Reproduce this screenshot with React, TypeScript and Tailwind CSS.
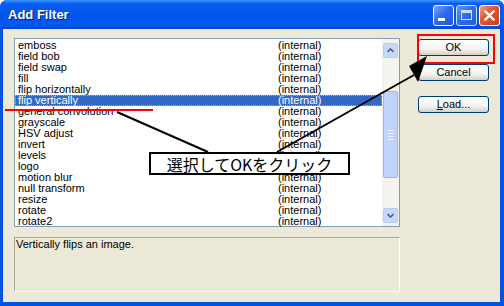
import React from 'react';

const filters = [
  'emboss',
  'field bob',
  'field swap',
  'fill',
  'flip horizontally',
  'flip vertically',
  'general convolution',
  'grayscale',
  'HSV adjust',
  'invert',
  'levels',
  'logo',
  'motion blur',
  'null transform',
  'resize',
  'rotate',
  'rotate2',
];

function CaptionButton({ kind }: { kind: 'min' | 'max' | 'close' }) {
  const bg =
    kind === 'close'
      ? 'bg-[linear-gradient(135deg,#f0a08a_0%,#e05a32_40%,#c2401c_100%)]'
      : kind === 'max'
        ? 'bg-[linear-gradient(135deg,#7fa6f5_0%,#3c6fe6_50%,#2d5fd8_100%)] opacity-80'
        : 'bg-[linear-gradient(135deg,#7fa6f5_0%,#2e6cf0_45%,#1d56de_100%)]';
  return (
    <div className={`w-[21px] h-[21px] rounded-[3px] border border-white flex items-center justify-center ${bg}`}>
      {kind === 'min' && <div className="w-[7px] h-[3px] bg-white mt-[9px] mr-[4px]" />}
      {kind === 'max' && <div className="w-[11px] h-[10px] border border-white border-t-[3px]" />}
      {kind === 'close' && (
        <svg width="11" height="11" viewBox="0 0 11 11">
          <path d="M1.5 1.5 L9.5 9.5 M9.5 1.5 L1.5 9.5" stroke="white" strokeWidth="2.4" strokeLinecap="square" />
        </svg>
      )}
    </div>
  );
}

function XpButton({ children }: { children: React.ReactNode }) {
  return (
    <div className="w-[71px] h-[17px] rounded-[3px] border border-[#003c74] bg-[linear-gradient(180deg,#ffffff_0%,#f4f4f0_60%,#d6d0c5_100%)] flex items-center justify-center text-[11px] text-black leading-none">
      {children}
    </div>
  );
}

export default function App() {
  return (
    <div className="relative w-[504px] h-[306px] overflow-hidden bg-white font-['Liberation_Sans','Noto_Sans_CJK_JP',sans-serif]">
      <div className="flex flex-col w-[504px] h-[306px] bg-[#0054e3] rounded-t-[7px]">
        {/* Title bar */}
        <div className="h-[29px] flex items-center justify-between pl-[8px] pr-[4px] rounded-t-[7px] bg-[linear-gradient(180deg,#3d95ff_0%,#0a5ff0_12%,#0055ea_50%,#0059f0_85%,#0046d6_100%)]">
          <span className="text-white font-bold text-[13px] [text-shadow:1px_1px_0_#0a1c7a]">Add Filter</span>
          <div className="flex gap-[2px] pt-[1px]">
            <CaptionButton kind="min" />
            <CaptionButton kind="max" />
            <CaptionButton kind="close" />
          </div>
        </div>

        {/* Body */}
        <div className="flex-1 mx-[3px] mb-[4px] mr-[4px] bg-[#ece9d8] flex pt-[9px] pl-[11px]">
          <div className="flex flex-col w-[386px]">
            {/* List */}
            <div className="h-[189px] border border-[#7f9db9] bg-white flex">
              <div className="flex-1 pt-[1px] text-[11px] leading-[11px] text-black">
                {filters.map((name) => {
                  const selected = name === 'flip vertically';
                  return (
                    <div
                      key={name}
                      className={`h-[11px] flex ${
                        selected
                          ? 'bg-[#316ac5] text-white outline-1 outline-dotted outline-[#e8a33b] -outline-offset-1'
                          : ''
                      }`}
                    >
                      <span className="w-[263px] pl-[3px]">{name}</span>
                      <span>(internal)</span>
                    </div>
                  );
                })}
              </div>
              {/* Scrollbar */}
              <div className="w-[17px] bg-[#f4f3ee] flex flex-col p-[1px] pt-[4px] pb-[3px]">
                <div className="h-[15px] rounded-[2px] border border-[#b7cbf5] bg-[#c8d8fb] flex items-center justify-center">
                  <svg width="7" height="5" viewBox="0 0 7 5"><path d="M0.5 4 L3.5 1 L6.5 4" stroke="#4d6185" strokeWidth="1.6" fill="none" /></svg>
                </div>
                <div className="h-[33px]" />
                <div className="h-[87px] rounded-[2px] border border-[#9ab4ee] bg-[#c1d3fb] flex flex-col items-center justify-center gap-[2px]">
                  <div className="w-[6px] h-[1px] bg-[#eef3ff]" />
                  <div className="w-[6px] h-[1px] bg-[#eef3ff]" />
                  <div className="w-[6px] h-[1px] bg-[#eef3ff]" />
                  <div className="w-[6px] h-[1px] bg-[#eef3ff]" />
                </div>
                <div className="flex-1" />
                <div className="h-[15px] rounded-[2px] border border-[#b7cbf5] bg-[#c8d8fb] flex items-center justify-center">
                  <svg width="7" height="5" viewBox="0 0 7 5"><path d="M0.5 1 L3.5 4 L6.5 1" stroke="#4d6185" strokeWidth="1.6" fill="none" /></svg>
                </div>
              </div>
            </div>

            {/* Description */}
            <div className="mt-[10px] h-[55px] border border-t-[#aca899] border-l-[#aca899] border-b-white border-r-white px-[1px] text-[11px] leading-[13px] text-black">
              Vertically flips an image.
            </div>
          </div>

          {/* Buttons */}
          <div className="flex flex-col ml-[18px] pt-[1px]">
            <XpButton>OK</XpButton>
            <div className="h-[8px]" />
            <XpButton>Cancel</XpButton>
            <div className="h-[15px]" />
            <XpButton>
              <span><span className="underline">L</span>oad...</span>
            </XpButton>
          </div>
        </div>
      </div>

      {/* Annotations */}
      <div className="absolute left-[5px] top-[109px] w-[148px] h-[2px] bg-[#ff0000]" />
      <div className="absolute left-[417px] top-[34px] w-[78px] h-[30px] border-2 border-[#ff0000]" />
      <svg className="absolute left-0 top-0 pointer-events-none" width="504" height="306" viewBox="0 0 504 306">
        <line x1="117" y1="112" x2="208" y2="152" stroke="black" strokeWidth="2" />
        <line x1="277" y1="152" x2="414" y2="75" stroke="black" strokeWidth="2" />
        <polygon points="427,56 409,66 418,82" fill="black" />
      </svg>
      <div className="absolute left-[149px] top-[152px] w-[201px] h-[23px] border-2 border-black bg-white flex items-center justify-center text-[16px] leading-none text-black font-['Noto_Sans_CJK_JP',sans-serif]">
        選択してOKをクリック
      </div>
    </div>
  );
}
